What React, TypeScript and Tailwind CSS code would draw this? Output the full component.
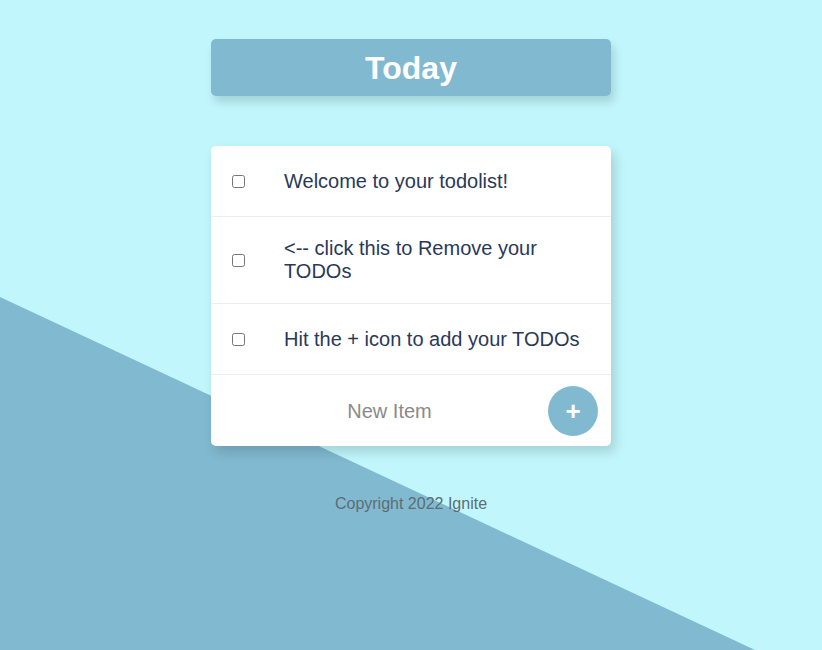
import React from "react";

const items = [
  "Welcome to your todolist!",
  "<-- click this to Remove your TODOs",
  "Hit the + icon to add your TODOs",
];

export default function App() {
  return (
    <div
      className="relative min-h-[650px] w-full overflow-hidden bg-[#c0f6fc]"
      style={{ fontFamily: '"Liberation Sans", Arial, sans-serif' }}
    >
      <div className="pointer-events-none absolute inset-0 bg-[#81b9d0] [clip-path:polygon(0_297px,755px_650px,0_650px)]" />
      <div className="relative flex flex-col items-center pt-[39px]">
        <div className="flex h-[57px] w-[400px] items-center justify-center rounded-[5px] bg-[#81b9d0] shadow-[3px_6px_10px_rgba(0,0,0,0.15)]">
          <h1 className="text-[32px] font-bold leading-none text-white">Today</h1>
        </div>
        <div className="mt-[50px] w-[400px] rounded-[5px] bg-white shadow-[4px_6px_12px_rgba(0,0,0,0.15)]">
          {items.map((t) => (
            <div
              key={t}
              className="flex min-h-[71px] items-center border-b border-[#eeeeee] py-5 pl-[21px]"
            >
              <input type="checkbox" className="h-[13px] w-[13px] shrink-0" />
              <p className="ml-[39px] w-[300px] text-[20px] leading-[23px] text-[#28395a]">{t}</p>
            </div>
          ))}
          <div className="flex h-[71px] items-center pl-5 pr-[13px]">
            <input
              type="text"
              placeholder="New Item"
              className="min-w-0 flex-1 bg-transparent text-center text-[20px] text-[#28395a] outline-none placeholder:text-[#8a8a8a]"
            />
            <button className="flex h-[50px] w-[50px] shrink-0 items-center justify-center rounded-full bg-[#81b9d0] text-[26px] font-bold leading-none text-white">
              +
            </button>
          </div>
        </div>
        <p className="mt-[46px] text-[16px] text-[#5d6d73]">Copyright 2022 Ignite</p>
      </div>
    </div>
  );
}
